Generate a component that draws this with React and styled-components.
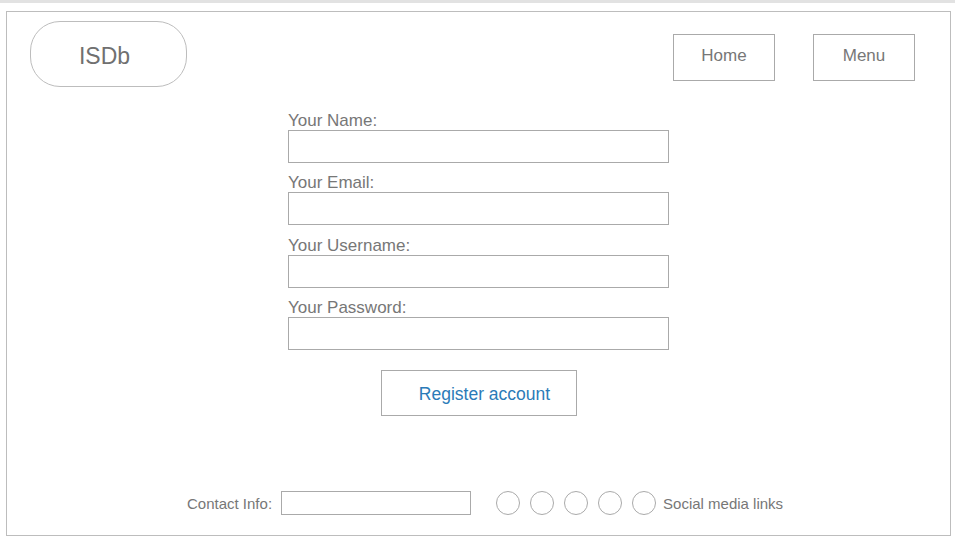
import React from "react";
import styled, { createGlobalStyle } from "styled-components";

const fields = ["Your Name:", "Your Email:", "Your Username:", "Your Password:"];

const App = () => {
  return (
    <>
      <GlobalStyle />
      <TopStrip />
      <Frame>
        <Header>
          <Logo>ISDb</Logo>
          <Nav>
            <NavButton>Home</NavButton>
            <NavButton>Menu</NavButton>
          </Nav>
        </Header>
        <Form>
          {fields.map((f) => (
            <Field key={f}>
              <Label>{f}</Label>
              <Input />
            </Field>
          ))}
          <Submit>Register account</Submit>
        </Form>
        <Footer>
          <FooterText>Contact Info:</FooterText>
          <ContactInput />
          <Circles>
            {[0, 1, 2, 3, 4].map((i) => (
              <Circle key={i} />
            ))}
          </Circles>
          <FooterText>Social media links</FooterText>
        </Footer>
      </Frame>
    </>
  );
};

const GlobalStyle = createGlobalStyle`
  body {
    margin: 0;
    background: #fff;
    font-family: "Liberation Sans", Arial, sans-serif;
    color: #777;
  }
`;

const TopStrip = styled.div`
  height: 3px;
  background: #e2e2e2;
`;

const Frame = styled.div`
  box-sizing: border-box;
  width: 945px;
  height: 525px;
  margin: 8px 0 0 6px;
  border: 1px solid #bdbdbd;
  display: flex;
  flex-direction: column;
`;

const Header = styled.div`
  display: flex;
  justify-content: space-between;
  align-items: flex-start;
  padding: 9px 35px 0 23px;
`;

const Logo = styled.div`
  box-sizing: border-box;
  width: 157px;
  height: 66px;
  border: 1px solid #bdbdbd;
  border-radius: 30px;
  display: flex;
  align-items: center;
  justify-content: center;
  padding: 4px 8px 0 0;
  font-size: 23px;
  color: #707070;
`;

const Nav = styled.div`
  display: flex;
  gap: 38px;
  margin-top: 13px;
`;

const NavButton = styled.div`
  box-sizing: border-box;
  width: 102px;
  height: 47px;
  border: 1px solid #aaa;
  display: flex;
  align-items: center;
  justify-content: center;
  font-size: 17px;
  color: #777;
  padding-bottom: 3px;
`;

const Form = styled.div`
  width: 381px;
  margin: 25px 0 0 281px;
  display: flex;
  flex-direction: column;
  gap: 11.3px;
`;

const Field = styled.div`
  display: flex;
  flex-direction: column;
`;

const Label = styled.div`
  font-size: 17px;
  line-height: 18px;
  color: #777;
`;

const Input = styled.div`
  box-sizing: border-box;
  height: 33px;
  border: 1px solid #aaa;
  background: #fff;
`;

const Submit = styled.div`
  box-sizing: border-box;
  align-self: center;
  width: 196px;
  height: 46px;
  margin-top: 9px;
  border: 1px solid #aaa;
  display: flex;
  align-items: center;
  justify-content: center;
  padding: 2px 0 0 12px;
  font-size: 17.5px;
  color: #2b7bb8;
`;

const Footer = styled.div`
  margin-top: auto;
  padding: 0 0 20px 180px;
  display: flex;
  align-items: center;
`;

const FooterText = styled.span`
  font-size: 15px;
  color: #777;
`;

const ContactInput = styled.div`
  box-sizing: border-box;
  width: 190px;
  height: 24px;
  margin-left: 9px;
  border: 1px solid #aaa;
`;

const Circles = styled.div`
  display: flex;
  gap: 10px;
  margin: 0 7px 0 25px;
`;

const Circle = styled.div`
  box-sizing: border-box;
  width: 24px;
  height: 24px;
  border-radius: 50%;
  border: 1px solid #aaa;
`;

export default App;
